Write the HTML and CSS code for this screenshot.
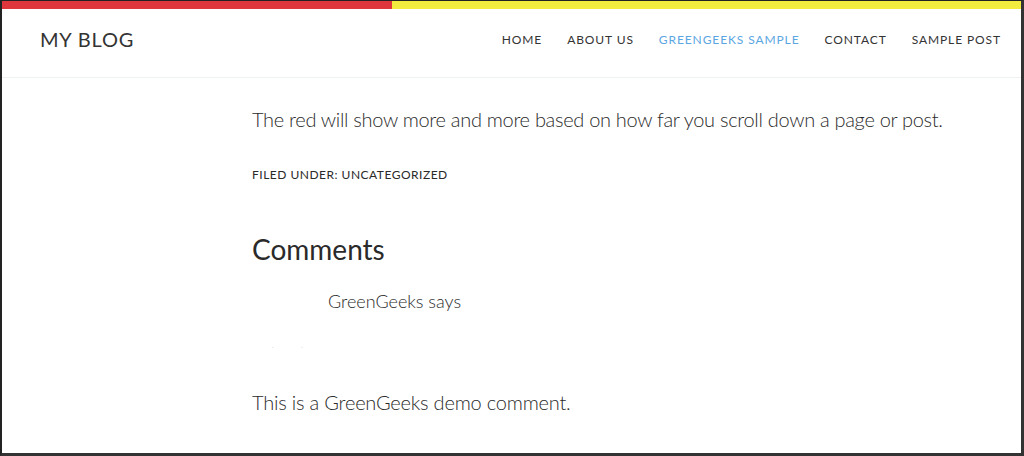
FILE: index.html
```html
<!DOCTYPE html>
<html lang="en">
<head>
    <meta charset="UTF-8">
    <meta name="viewport" content="width=device-width, initial-scale=1.0">
    <title>My Blog</title>
    <link rel="stylesheet" href="styles.css">
</head>
<body>
<div class="frame">
    <div class="progress">
        <div class="progress-fill" style="width: 38.3%;"></div>
    </div>
    <header class="site-header">
        <div class="site-title">MY BLOG</div>
        <nav class="nav">
            <a href="#">HOME</a>
            <a href="#">ABOUT US</a>
            <a href="#" class="current">GREENGEEKS SAMPLE</a>
            <a href="#">CONTACT</a>
            <a href="#">SAMPLE POST</a>
        </nav>
    </header>
    <main class="content">
        <p class="entry-text">The red will show more and more based on how far you scroll down a page or post.</p>
        <p class="entry-meta">FILED UNDER: <a href="#">UNCATEGORIZED</a></p>

        <h2 class="comments-title">Comments</h2>
        <div class="comment-author">
            <span class="avatar"></span>
            <span class="author-name">GreenGeeks says</span>
        </div>
        <div class="comment-meta"><span class="dot"></span><span class="dot"></span></div>
        <p class="comment-text">This is a GreenGeeks demo comment.</p>
    </main>
</div>
</body>
</html>
```

FILE: styles.css
```css
html, body {
    margin: 0;
    padding: 0;
}
body {
    font-family: Lato, "Open Sans", sans-serif;
    color: #333;
    background: #fff;
}
.frame {
    box-sizing: border-box;
    height: 456px;
    border-top: 1px solid #222;
    border-left: 2px solid #222;
    border-right: 3px solid #333;
    border-bottom: 3px solid #333;
    overflow: hidden;
}
.progress {
    height: 8px;
    background: #f1ec3d;
}
.progress-fill {
    height: 100%;
    background: #df353d;
}
.site-header {
    display: flex;
    align-items: center;
    justify-content: space-between;
    height: 68px;
    padding: 0 20px 0 38px;
    border-bottom: 1px solid #eef1f1;
}
.site-title {
    font-size: 20px;
    letter-spacing: 0.8px;
    color: #333;
    margin-top: -8px;
}
.nav {
    display: flex;
    gap: 25px;
    margin-top: -8px;
}
.nav a {
    font-size: 12px;
    letter-spacing: 0.9px;
    color: #333;
    text-decoration: none;
}
.nav a.current {
    color: #5ba6e2;
}
.content {
    padding-left: 250px;
    padding-right: 40px;
    color: #2a2a2a;
}
.entry-text {
    font-size: 20px;
    font-weight: 300;
    letter-spacing: -0.3px;
    margin: 28px 0 0;
    line-height: 26px;
}
.entry-meta {
    font-size: 12px;
    letter-spacing: 0.5px;
    margin: 35px 0 0;
}
.entry-meta a {
    color: inherit;
    text-decoration: none;
}
.comments-title {
    font-size: 28px;
    font-weight: 400;
    margin: 50px 0 0;
    line-height: 34px;
}
.comment-author {
    display: flex;
    align-items: center;
    margin-top: 24px;
}
.avatar {
    width: 76px;
}
.author-name {
    font-size: 18px;
    font-weight: 300;
}
.comment-meta {
    display: flex;
    gap: 27px;
    height: 4px;
    padding-left: 20px;
    margin-top: 35px;
}
.dot {
    width: 2px;
    height: 1px;
    background: #eee;
}
.comment-text {
    font-size: 20px;
    font-weight: 300;
    letter-spacing: -0.2px;
    margin: 39px 0 0;
}
```
